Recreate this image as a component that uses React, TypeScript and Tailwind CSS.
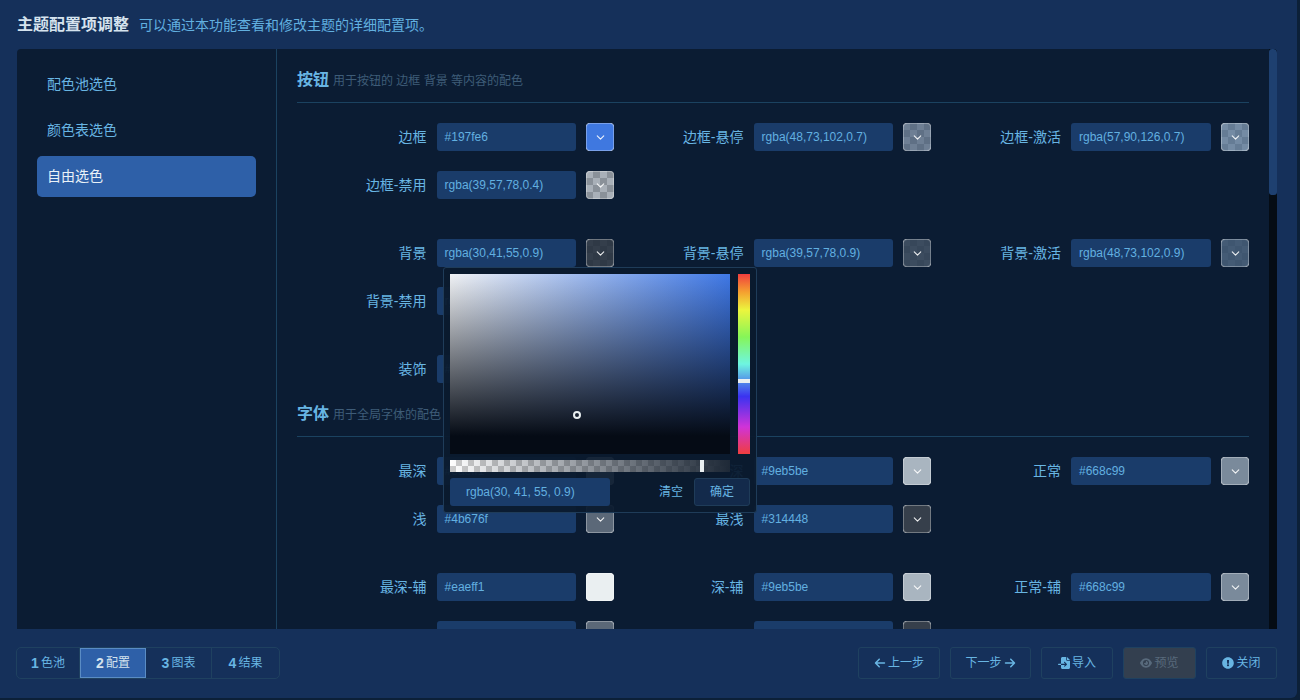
import { ChevronDown } from "lucide-react";
import { FaArrowLeft, FaArrowRight, FaEye, FaFileImport } from "react-icons/fa6";
import { FaExclamationCircle } from "react-icons/fa";

interface ColorField {
  label: string;
  value: string;
  swatch: string;
  checker?: boolean;
}

const FONT = "font-['Liberation_Sans','Noto_Sans_CJK_SC',sans-serif]";

const BUTTON_FIELDS: ColorField[][] = [
  [
    { label: "边框", value: "#197fe6", swatch: "#3f78e0" },
    { label: "边框-悬停", value: "rgba(48,73,102,0.7)", swatch: "rgba(48,73,102,0.7)", checker: true },
    { label: "边框-激活", value: "rgba(57,90,126,0.7)", swatch: "rgba(57,90,126,0.7)", checker: true },
    { label: "边框-禁用", value: "rgba(39,57,78,0.4)", swatch: "rgba(39,57,78,0.4)", checker: true },
  ],
  [
    { label: "背景", value: "rgba(30,41,55,0.9)", swatch: "rgba(30,41,55,0.9)", checker: true },
    { label: "背景-悬停", value: "rgba(39,57,78,0.9)", swatch: "rgba(39,57,78,0.9)", checker: true },
    { label: "背景-激活", value: "rgba(48,73,102,0.9)", swatch: "rgba(48,73,102,0.9)", checker: true },
    { label: "背景-禁用", value: "rgba(30,41,55,0.4)", swatch: "rgba(30,41,55,0.4)", checker: true },
  ],
  [{ label: "装饰", value: "#197fe6", swatch: "#3f78e0" }],
];

// the last row sits below the fold, only the top of its boxes shows
const FONT_FIELDS: ColorField[][] = [
  [
    { label: "最深", value: "#eaeff1", swatch: "#eaeff1" },
    { label: "深", value: "#9eb5be", swatch: "#a9b5c0" },
    { label: "正常", value: "#668c99", swatch: "#7a8a9b" },
    { label: "浅", value: "#4b676f", swatch: "#5b6878" },
    { label: "最浅", value: "#314448", swatch: "#363f4b" },
  ],
  [
    { label: "最深-辅", value: "#eaeff1", swatch: "#eaeff1" },
    { label: "深-辅", value: "#9eb5be", swatch: "#a9b5c0" },
    { label: "正常-辅", value: "#668c99", swatch: "#7a8a9b" },
    { label: "", value: "", swatch: "#5b6878" },
    { label: "", value: "", swatch: "#363f4b" },
  ],
];

const Field = ({ field }: { field: ColorField }) => (
  <div className="flex h-7 items-center">
    <span className="w-[130px] text-right text-sm text-[#68b5e3]">{field.label}</span>
    <div className="ml-2.5 flex h-7 w-[140px] items-center rounded-[3px] bg-[#1a3c6a] pl-2 text-xs text-[#62b0e0]">
      {field.value}
    </div>
    <div
      className={
        field.checker
          ? "relative ml-2.5 size-7 overflow-hidden rounded-[4px] bg-white bg-[conic-gradient(#ccc_25%,#fff_0_50%,#ccc_0_75%,#fff_0)] bg-size-[14px_14px]"
          : "relative ml-2.5 size-7 overflow-hidden rounded-[4px] bg-white"
      }
    >
      <div
        className="flex size-full items-center justify-center rounded-[4px] border border-white/30"
        style={{ backgroundColor: field.swatch }}
      >
        {field.swatch !== "#eaeff1" && <ChevronDown size={13} strokeWidth={2} className="text-white/90" />}
      </div>
    </div>
  </div>
);

const Section = ({ title, desc, groups }: { title: string; desc: string; groups: ColorField[][] }) => (
  <section>
    <div className="mb-5 flex h-[54px] items-center gap-1 border-b border-[#1b4260] pt-2">
      <h2 className="text-base font-bold text-[#68b5e3]">{title}</h2>
      <span className="pt-0.5 text-xs text-[#3e5c78]">{desc}</span>
    </div>
    <div className="flex flex-col gap-10">
      {groups.map((group, i) => (
        <div key={i} className="grid grid-cols-[317px_317px_318px] gap-y-5">
          {group.map((field, j) => (
            <Field key={j} field={field} />
          ))}
        </div>
      ))}
    </div>
  </section>
);

const ColorPicker = () => (
  <div className="absolute left-[426px] top-[218px] z-10 flex h-[246px] w-[314px] flex-col gap-1.5 rounded-[3px] border border-[#1f3c59] bg-[#0b1a2e]/95 p-1.5">
    <div className="flex h-[180px] gap-2">
      <div className="relative w-[280px] bg-[linear-gradient(to_top,#050b15,#050b15_10%,transparent),linear-gradient(to_right,#f0f2f5,#3f78e6)]">
        <span className="absolute left-[123px] top-[137px] size-2 rounded-full border-2 border-[#eaeff1]" />
      </div>
      <div className="relative w-3 bg-[linear-gradient(to_bottom,#f03e3e,#f5a030_10%,#ecf53e_20%,#86f558_35%,#6ef5e0_50%,#3a33f0_68%,#d033d8_85%,#f03e3e)]">
        <span className="absolute left-0 top-[105px] h-1 w-full bg-[#eaeff1]" />
      </div>
    </div>
    <div className="relative h-3 w-[280px] bg-white bg-[conic-gradient(#ccc_25%,#fff_0_50%,#ccc_0_75%,#fff_0)] bg-size-[12px_12px]">
      <div className="size-full bg-[linear-gradient(to_right,transparent,#1e2937)]" />
      <span className="absolute left-[250px] top-0 h-3 w-1 bg-[#eaeff1]" />
    </div>
    <div className="flex h-7 items-center">
      <div className="flex h-7 w-40 items-center rounded-[3px] bg-[#1a3c6a] pl-4 text-xs text-[#62b0e0]">
        rgba(30, 41, 55, 0.9)
      </div>
      <span className="ml-auto text-xs text-[#68b5e3]">清空</span>
      <div className="ml-[11px] flex h-7 w-14 items-center justify-center rounded-[3px] border border-[#1f3c59] bg-[#132a4b] text-xs text-[#68b5e3]">
        确定
      </div>
    </div>
  </div>
);

const STEPS = [
  { no: "1", label: "色池", w: "w-[63px]" },
  { no: "2", label: "配置", w: "w-[66px]", active: true },
  { no: "3", label: "图表", w: "w-[66px]" },
  { no: "4", label: "结果", w: "w-[67px]" },
];

const ACTION = "flex h-8 items-center justify-center gap-0.5 rounded-[3px] border border-[#1f4160] text-xs text-[#68b5e3]";

const App = () => (
  <div className={`${FONT} h-[700px] w-[1300px] overflow-hidden bg-[#0c2038]`}>
    <div className="flex h-[698px] w-[1297px] flex-col rounded-br-md bg-[#15305a]">
      <header className="flex h-[49px] shrink-0 items-center gap-2.5 pl-[17px]">
        <h1 className="text-base font-bold text-[#d5e3ee]">主题配置项调整</h1>
        <p className="text-sm text-[#62b0e0]">可以通过本功能查看和修改主题的详细配置项。</p>
      </header>

      <main className="relative ml-[17px] mr-5 flex h-[580px] shrink-0 overflow-hidden rounded-t-[4px] bg-[#0b1c33]">
        <aside className="flex w-[260px] shrink-0 flex-col gap-[5px] border-r border-[#1b4260] px-5 pt-[15px]">
          <div className="flex h-[41px] items-center px-2.5 pb-0.5 text-sm text-[#68b5e3]">配色池选色</div>
          <div className="flex h-[41px] items-center px-2.5 pb-0.5 text-sm text-[#68b5e3]">颜色表选色</div>
          <div className="flex h-[41px] items-center rounded-[5px] bg-[#2e60a8] px-2.5 pb-0.5 text-sm text-[#eaf2f8]">
            自由选色
          </div>
        </aside>
        <div className="w-[952px] shrink-0 pl-5">
          <div className="w-[952px]">
            <Section title="按钮" desc="用于按钮的 边框 背景 等内容的配色" groups={BUTTON_FIELDS} />
            <Section title="字体" desc="用于全局字体的配色" groups={FONT_FIELDS} />
          </div>
        </div>
        <ColorPicker />
        <div className="absolute right-0 top-0 h-full w-2 bg-[#050c14]">
          <div className="h-[146px] w-full rounded-[3px] bg-[#1e4070]" />
        </div>
      </main>

      <footer className="flex flex-1 items-center justify-between pb-0.5 pl-4 pr-5">
        <div className="flex h-8 overflow-hidden rounded-[5px] border border-[#1f4160]">
          {STEPS.map((s) => (
            <div
              key={s.no}
              className={
                s.active
                  ? `flex ${s.w} items-center justify-center gap-0.5 border border-[#5a8cc4] bg-[#2e60a8] text-xs text-[#d5e3ee]`
                  : `flex ${s.w} items-center justify-center gap-0.5 border-r border-[#1f4160] text-xs text-[#68b5e3] last:border-r-0`
              }
            >
              <b className="text-sm">{s.no}</b>
              {s.label}
            </div>
          ))}
        </div>
        <div className="flex gap-2.5">
          <div className={`${ACTION} w-[82px]`}>
            <FaArrowLeft size={12} />
            上一步
          </div>
          <div className={`${ACTION} w-[81px]`}>
            下一步
            <FaArrowRight size={12} />
          </div>
          <div className={`${ACTION} w-[72px]`}>
            <FaFileImport size={12} />
            导入
          </div>
          <div className={`${ACTION} w-[73px] bg-[#333f4f] text-[#586a7c]`}>
            <FaEye size={12} />
            预览
          </div>
          <div className={`${ACTION} w-[71px]`}>
            <FaExclamationCircle size={12} />
            关闭
          </div>
        </div>
      </footer>
    </div>
  </div>
);

export default App;
